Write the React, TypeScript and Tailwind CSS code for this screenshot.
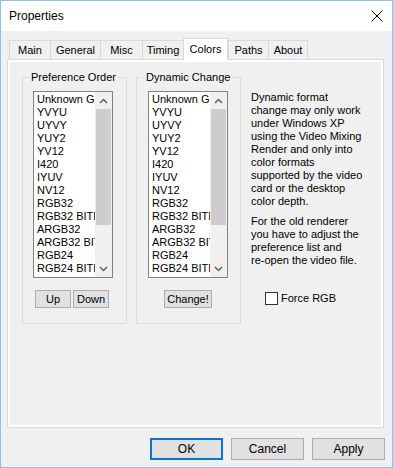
import React from 'react'

const formats = [
    'Unknown GUID',
    'YVYU',
    'UYVY',
    'YUY2',
    'YV12',
    'I420',
    'IYUV',
    'NV12',
    'RGB32',
    'RGB32 BITFIELDS',
    'ARGB32',
    'ARGB32 BITFIELDS',
    'RGB24',
    'RGB24 BITFIELDS',
]

const tabs = [
    { label: 'Main', w: 'w-[41px]' },
    { label: 'General', w: 'w-[50px]' },
    { label: 'Misc', w: 'w-[42px]' },
    { label: 'Timing', w: 'w-[41px]' },
    { label: 'Colors', w: 'w-[45px]' },
    { label: 'Paths', w: 'w-[40px]' },
    { label: 'About', w: 'w-[40px]' },
]

function ListBox() {
    return (
        <div className="flex w-[80px] h-[187px] border border-[#828282] bg-white">
            <div className="flex-1 overflow-hidden pl-[3px] pt-[1px]">
                {formats.map((f) => (
                    <div key={f} className="h-[13px] leading-[13px] whitespace-nowrap">
                        {f}
                    </div>
                ))}
            </div>
            {/* scrollbar */}
            <div className="w-[17px] flex flex-col bg-[#f0f0f0]">
                <div className="h-[17px] flex items-center justify-center">
                    <svg width="9" height="6" viewBox="0 0 9 6">
                        <path d="M1 5 L4.5 1.5 L8 5" fill="none" stroke="#606060" strokeWidth="1.5" />
                    </svg>
                </div>
                <div className="h-[116px] mx-[1px] bg-[#cdcdcd]" />
                <div className="flex-1" />
                <div className="h-[17px] flex items-center justify-center">
                    <svg width="9" height="6" viewBox="0 0 9 6">
                        <path d="M1 1 L4.5 4.5 L8 1" fill="none" stroke="#606060" strokeWidth="1.5" />
                    </svg>
                </div>
            </div>
        </div>
    )
}

function SmallButton({ label, w }: { label: string; w: string }) {
    return (
        <button className={`${w} h-[18px] bg-[#e1e1e1] border border-[#adadad] leading-[16px] text-[11px]`}>
            {label}
        </button>
    )
}

export default function App() {
    return (
        <div className="w-[393px] h-[468px] bg-[#f0f0f0] border border-[#93bfe9] flex flex-col font-['Liberation_Sans',Arial,sans-serif] text-[11px] text-black">
            {/* Title bar */}
            <div className="h-[30px] bg-white flex items-center justify-between pl-[8px] pr-[9px]">
                <span className="text-[12px]">Properties</span>
                <svg width="12" height="12" viewBox="0 0 12 12">
                    <path d="M0.5 0.5 L11.5 11.5 M11.5 0.5 L0.5 11.5" stroke="#000" strokeWidth="1" />
                </svg>
            </div>

            <div className="pl-[6px] pr-[8px] pt-[7px] flex flex-col">
                {/* Tabs */}
                <div className="flex items-end h-[21px] pl-[2px]">
                    {tabs.map((t, i) => {
                        const sel = t.label === 'Colors'
                        return (
                            <div
                                key={t.label}
                                className={
                                    sel
                                        ? `${t.w} h-[22px] -mb-px relative z-10 bg-white border-t border-l border-r border-[#d9d9d9] text-center leading-[20px]`
                                        : `${t.w} h-[19px] bg-[#f0f0f0] border-t border-l border-[#d9d9d9] text-center leading-[19px] ${i === tabs.length - 1 ? 'border-r' : ''}`
                                }
                            >
                                {t.label}
                            </div>
                        )
                    })}
                </div>

                {/* Panel */}
                <div className="h-[369px] border border-[#d9d9d9] bg-white p-[2px] flex">
                    <div className="flex-1 bg-[#f0f0f0] flex pt-[9px] pl-[12px]">
                        <fieldset className="w-[105px] h-[253px] border border-[#dcdcdc]">
                            <legend className="ml-[6px] px-[2px] leading-[13px] whitespace-nowrap">Preference Order</legend>
                            <div className="pl-[10px]">
                                <div className="mt-[7px]">
                                    <ListBox />
                                </div>
                                <div className="mt-[12px] ml-[2px] flex gap-[2px]">
                                    <SmallButton label="Up" w="w-[36px]" />
                                    <SmallButton label="Down" w="w-[36px]" />
                                </div>
                            </div>
                        </fieldset>

                        <fieldset className="ml-[9px] w-[105px] h-[253px] border border-[#dcdcdc]">
                            <legend className="ml-[7px] px-[2px] leading-[13px] whitespace-nowrap">Dynamic Change</legend>
                            <div className="pl-[11px]">
                                <div className="mt-[7px]">
                                    <ListBox />
                                </div>
                                <div className="mt-[12px] ml-[16px] flex">
                                    <SmallButton label="Change!" w="w-[48px]" />
                                </div>
                            </div>
                        </fieldset>

                        <div className="ml-[10px] mt-[20px] w-[128px] leading-[13px]">
                            <p>
                                Dynamic format
                                <br />
                                change may only work
                                <br />
                                under Windows XP
                                <br />
                                using the Video Mixing
                                <br />
                                Render and only into
                                <br />
                                color formats
                                <br />
                                supported by the video
                                <br />
                                card or the desktop
                                <br />
                                color depth.
                            </p>
                            <p className="mt-[7px]">
                                For the old renderer
                                <br />
                                you have to adjust the
                                <br />
                                preference list and
                                <br />
                                re-open the video file.
                            </p>
                            <div className="mt-[25px] ml-[14px] flex items-center gap-[3px]">
                                <div className="w-[13px] h-[13px] border border-[#333333] bg-white" />
                                <span className="leading-[13px]">Force RGB</span>
                            </div>
                        </div>
                    </div>
                </div>
            </div>

            {/* Bottom buttons */}
            <div className="mt-[10px] flex justify-end gap-[8px] pr-[7px]">
                <button className="w-[73px] h-[22px] bg-[#e1e1e1] border-2 border-[#0078d7] text-[12px]">OK</button>
                <button className="w-[73px] h-[22px] bg-[#e1e1e1] border border-[#adadad] text-[12px]">Cancel</button>
                <button className="w-[73px] h-[22px] bg-[#e1e1e1] border border-[#adadad] text-[12px]">Apply</button>
            </div>
        </div>
    )
}
